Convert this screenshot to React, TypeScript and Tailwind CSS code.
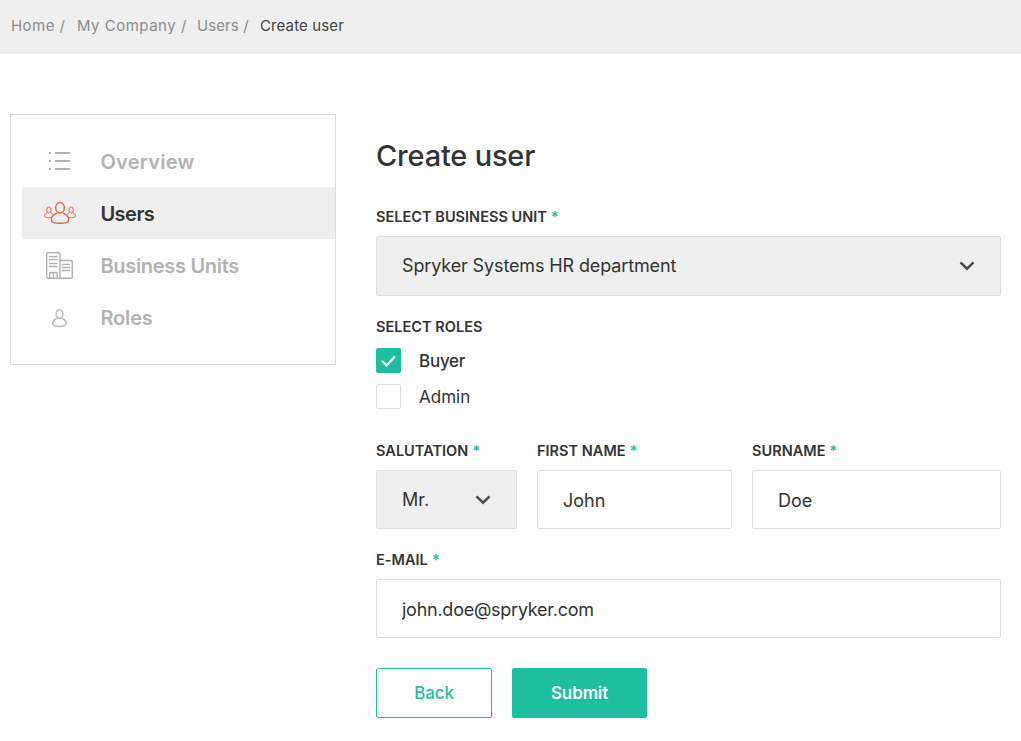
import type { ReactNode } from "react";

function ListIcon() {
  return (
    <svg width="21" height="20" viewBox="0 0 21 20" fill="#b2b2b2">
      {[1, 9, 17].map((y) => (
        <g key={y}>
          <rect x="0" y={y} width="2" height="2" />
          <rect x="6" y={y} width="15" height="2" />
        </g>
      ))}
    </svg>
  );
}

function UsersIcon() {
  return (
    <svg className="ml-px" width="32" height="24" viewBox="0 0 32 24" fill="none" stroke="#ee5f49" strokeWidth="1.4">
      <ellipse cx="16" cy="6.8" rx="4.3" ry="5.3" />
      <path d="M13 11.8c-.8 1.300-5.700 1.600-5.700 6.600 0 3 4.500 3.900 8.700 3.900s8.700-.9 8.700-3.900c0-5-4.900-5.300-5.700-6.600" />
      <g strokeWidth="1">
        <ellipse cx="4.900" cy="9" rx="2.200" ry="3" />
        <path d="M3.300 11.500C2.500 12.800.6 12.500.6 15c0 1.300 2.400 1.800 6.300 1.600M6.500 11.500c.6 1.100 1.900 1.100 2.700 2" />
        <ellipse cx="27.100" cy="9" rx="2.200" ry="3" />
        <path d="M28.700 11.500c.8 1.300 2.700 1 2.700 3.500 0 1.300-2.400 1.800-6.300 1.600M25.500 11.500c-.6 1.100-1.900 1.100-2.700 2" />
      </g>
    </svg>
  );
}

function BuildingsIcon() {
  return (
    <svg width="27" height="27" viewBox="0 0 27 27" fill="none" stroke="#b2b2b2" strokeWidth="1.4">
      <path d="M14 26.300H2A1.300 1.300 0 0 1 .7 25V2A1.300 1.300 0 0 1 2 .7h10.700A1.300 1.300 0 0 1 14 2v24.300h11a1.300 1.300 0 0 0 1.300-1.300V9.800A1.300 1.300 0 0 0 25 8.500H14" />
      <path d="M3 4.500h8.500M3 7.500h8.500M3 11.500h8.500M3 14.500h8.500M16 12.500h8M16 15.500h8M16 18.500h8M3.700 26v-4.300a1.200 1.200 0 0 1 1.200-1.200h5.200a1.200 1.200 0 0 1 1.200 1.200V26M7.500 20.500V26" />
    </svg>
  );
}

function RoleIcon() {
  return (
    <svg className="mt-[2px]" width="15" height="18" viewBox="0 0 15 18" fill="none" stroke="#b2b2b2" strokeWidth="1.200">
      <ellipse cx="7.500" cy="5" rx="3.400" ry="4.400" />
      <path d="M5.200 9.200C4.600 10.400.6 10.200.6 14.100c0 2.400 3.400 3.300 6.900 3.300s6.900-.9 6.900-3.300c0-3.900-4-3.700-4.600-4.900" />
    </svg>
  );
}

function Chevron() {
  return (
    <svg width="16" height="10" viewBox="0 0 16 10" fill="none" stroke="#4b4b4b" strokeWidth="2.500">
      <path d="M1.500 1.300 8 7.700l6.500-6.400" />
    </svg>
  );
}

function NavItem({
  icon,
  active,
  tracking,
  children,
}: {
  icon: ReactNode;
  active?: boolean;
  tracking: string;
  children: ReactNode;
}) {
  return (
    <a
      className={`flex h-[52px] items-center text-[20px] font-semibold ${active ? "bg-[#efefef] text-[#333]" : "text-[#b2b2b2]"}`}
    >
      <span className="flex w-[75px] shrink-0 justify-center">{icon}</span>
      <span className={`ml-[3.4px] pt-[2px] ${tracking}`}>{children}</span>
    </a>
  );
}

function Label({ required, children }: { required?: boolean; children: ReactNode }) {
  return (
    <span className="block h-5 pt-px text-[14.5px] leading-5 font-semibold tracking-[0.03px] whitespace-nowrap uppercase">
      {children}
      {required && <span className="text-[15px] leading-none text-[#1ebea0]"> *</span>}
    </span>
  );
}

const inputClass =
  "mt-[10px] block h-[59px] w-full rounded-[2px] border border-[#dce0e5] bg-white pt-[2px] pr-[25px] pl-[25px] text-[18px] outline-none";

export default function App() {
  return (
    <div className="min-h-[741px] w-[1021px] bg-white font-[Inter,sans-serif] text-[#333]">
      <nav className="flex h-[54px] bg-[#efefef] pl-[11px] text-[15px] leading-[52px] tracking-[0.2px] whitespace-nowrap text-[#8c8c8c]">
        <span className="w-[66px] tracking-[0.45px]">Home /</span>
        <span className="w-[120px] tracking-[0.5px]">My Company /</span>
        <span className="w-[63px] tracking-[0.1px]">Users /</span>
        <span className="tracking-[0.12px] text-[#444]">Create user</span>
      </nav>

      <main className="flex items-start pt-[60px] pl-[10px]">
        <aside className="h-[251px] w-[326px] border border-[#dcdcdc] pt-5 pl-[11px]">
          <NavItem icon={<ListIcon />} tracking="tracking-[0.25px]">Overview</NavItem>
          <NavItem icon={<UsersIcon />} tracking="tracking-[-0.5px]" active>Users</NavItem>
          <NavItem icon={<BuildingsIcon />} tracking="tracking-[-0.3px]">Business Units</NavItem>
          <NavItem icon={<RoleIcon />} tracking="tracking-[-0.15px]">Roles</NavItem>
        </aside>

        <form className="ml-10 w-[625px] pt-[22px]">
          <h1 className="h-10 text-[29px] leading-10 font-medium tracking-[-0.2px]">Create user</h1>

          <div className="mt-[30px]">
            <Label required>Select business unit</Label>
            <div className="mt-[10px] flex h-[60px] items-center justify-between rounded-[2px] border border-[#dce0e5] bg-[#efefef] px-[25px] text-[18px]">
              <span className="pb-px tracking-[-0.13px]">Spryker Systems HR department</span>
              <Chevron />
            </div>
          </div>

          <div className="mt-5">
            <Label>Select roles</Label>
            <div className="mt-3 flex h-[25px] items-center gap-[18px] text-[17px] font-medium">
              <span className="flex size-[25px] items-center justify-center rounded-[2px] bg-[#1ebea0]">
                <svg width="15" height="12" viewBox="0 0 15 12" fill="none" stroke="white" strokeWidth="2.300">
                  <path d="m1 6 4.700 4.300L14 1.400" />
                </svg>
              </span>
              <span className="pt-[2px] tracking-[-0.25px]">Buyer</span>
            </div>
            <div className="mt-[11px] flex h-[25px] items-center gap-[18px] text-[17px]">
              <span className="size-[25px] rounded-[2px] border border-[#dce0e5]" />
              <span className="pt-[2px]">Admin</span>
            </div>
          </div>

          <div className="mt-[31px] grid grid-cols-[141px_195px_249px] gap-5">
            <div>
              <Label required>Salutation</Label>
              <div className="mt-[10px] flex h-[59px] items-center justify-between rounded-[2px] border border-[#dce0e5] bg-[#efefef] px-[25px] text-[18px]">
                <span>Mr.</span>
                <Chevron />
              </div>
            </div>
            <label>
              <Label required>First name</Label>
              <input className={inputClass} defaultValue="John" />
            </label>
            <label>
              <Label required>Surname</Label>
              <input className={inputClass} defaultValue="Doe" />
            </label>
          </div>

          <label className="mt-5 block">
            <Label required>E-mail</Label>
            <input className={`${inputClass} tracking-[-0.25px]`} defaultValue="john.doe@spryker.com" />
          </label>

          <div className="mt-[30px] flex gap-5 text-[17px]">
            <button type="button" className="h-[50px] w-[116px] rounded-[2px] border border-[#1ebea0] pt-[2px] font-medium tracking-[-0.1px] text-[#1ebea0]">
              Back
            </button>
            <button type="button" className="h-[50px] w-[135px] rounded-[2px] bg-[#1ebea0] pt-[2px] font-semibold tracking-[-0.1px] text-white">
              Submit
            </button>
          </div>
        </form>
      </main>
    </div>
  );
}
